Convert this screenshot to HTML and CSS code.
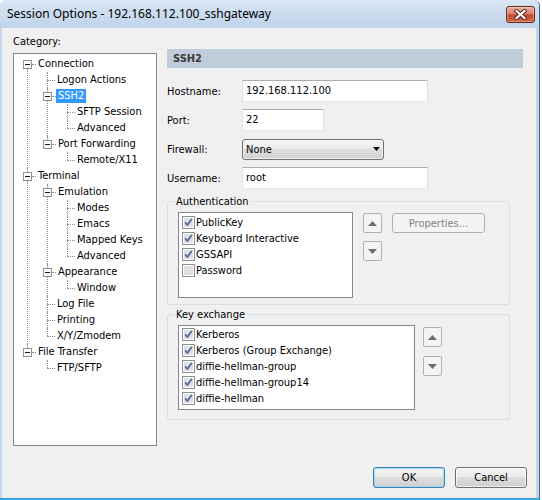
FILE: index.html
```html
<!DOCTYPE html>
<html>
<head>
<meta charset="utf-8">
<title>Session Options</title>
<link rel="stylesheet" href="styles.css">
</head>
<body>
<div class="window">
  <div class="titlebar">
    <span class="title">Session Options - 192.168.112.100_sshgateway</span>
    <div class="close"><svg width="13" height="11" viewBox="0 0 13 11"><path d="M2.5 2 L10.5 9 M10.5 2 L2.5 9" stroke="#5e2218" stroke-width="4" stroke-linecap="square" fill="none"/><path d="M2.5 2 L10.5 9 M10.5 2 L2.5 9" stroke="#fff" stroke-width="2.2" stroke-linecap="square" fill="none"/></svg></div>
  </div>
  <div class="client">
    <div class="main">
      <div class="left">
        <div class="cat-label">Category:</div>
        <div class="tree">
          <ul>
            <li>
              <div class="row"><svg class="exp" width="9" height="9" viewBox="0 0 9 9"><rect x=".5" y=".5" width="8" height="8" fill="#fafafa" stroke="#939393"/><path d="M2 4.5h5" stroke="#1a1a1a"/></svg><span class="h"></span><span class="lbl">Connection</span></div>
              <ul>
                <li><div class="row"><span class="h leaf"></span><span class="lbl">Logon Actions</span></div></li>
                <li>
                  <div class="row"><svg class="exp" width="9" height="9" viewBox="0 0 9 9"><rect x=".5" y=".5" width="8" height="8" fill="#fafafa" stroke="#939393"/><path d="M2 4.5h5" stroke="#1a1a1a"/></svg><span class="h"></span><span class="lbl sel">SSH2</span></div>
                  <ul>
                    <li><div class="row"><span class="h leaf"></span><span class="lbl">SFTP Session</span></div></li>
                    <li><div class="row"><span class="h leaf"></span><span class="lbl">Advanced</span></div></li>
                  </ul>
                </li>
                <li>
                  <div class="row"><svg class="exp" width="9" height="9" viewBox="0 0 9 9"><rect x=".5" y=".5" width="8" height="8" fill="#fafafa" stroke="#939393"/><path d="M2 4.5h5" stroke="#1a1a1a"/></svg><span class="h"></span><span class="lbl">Port Forwarding</span></div>
                  <ul>
                    <li><div class="row"><span class="h leaf"></span><span class="lbl">Remote/X11</span></div></li>
                  </ul>
                </li>
              </ul>
            </li>
            <li>
              <div class="row"><svg class="exp" width="9" height="9" viewBox="0 0 9 9"><rect x=".5" y=".5" width="8" height="8" fill="#fafafa" stroke="#939393"/><path d="M2 4.5h5" stroke="#1a1a1a"/></svg><span class="h"></span><span class="lbl">Terminal</span></div>
              <ul>
                <li>
                  <div class="row"><svg class="exp" width="9" height="9" viewBox="0 0 9 9"><rect x=".5" y=".5" width="8" height="8" fill="#fafafa" stroke="#939393"/><path d="M2 4.5h5" stroke="#1a1a1a"/></svg><span class="h"></span><span class="lbl">Emulation</span></div>
                  <ul>
                    <li><div class="row"><span class="h leaf"></span><span class="lbl">Modes</span></div></li>
                    <li><div class="row"><span class="h leaf"></span><span class="lbl">Emacs</span></div></li>
                    <li><div class="row"><span class="h leaf"></span><span class="lbl">Mapped Keys</span></div></li>
                    <li><div class="row"><span class="h leaf"></span><span class="lbl">Advanced</span></div></li>
                  </ul>
                </li>
                <li>
                  <div class="row"><svg class="exp" width="9" height="9" viewBox="0 0 9 9"><rect x=".5" y=".5" width="8" height="8" fill="#fafafa" stroke="#939393"/><path d="M2 4.5h5" stroke="#1a1a1a"/></svg><span class="h"></span><span class="lbl">Appearance</span></div>
                  <ul>
                    <li><div class="row"><span class="h leaf"></span><span class="lbl">Window</span></div></li>
                  </ul>
                </li>
                <li><div class="row"><span class="h leaf"></span><span class="lbl">Log File</span></div></li>
                <li><div class="row"><span class="h leaf"></span><span class="lbl">Printing</span></div></li>
                <li><div class="row"><span class="h leaf"></span><span class="lbl">X/Y/Zmodem</span></div></li>
              </ul>
            </li>
            <li>
              <div class="row"><svg class="exp" width="9" height="9" viewBox="0 0 9 9"><rect x=".5" y=".5" width="8" height="8" fill="#fafafa" stroke="#939393"/><path d="M2 4.5h5" stroke="#1a1a1a"/></svg><span class="h"></span><span class="lbl">File Transfer</span></div>
              <ul>
                <li><div class="row"><span class="h leaf"></span><span class="lbl">FTP/SFTP</span></div></li>
              </ul>
            </li>
          </ul>
        </div>
      </div>

      <div class="right">
        <div class="header">SSH2</div>
        <div class="form">
          <div class="frow"><span class="flabel">Hostname:</span><div class="tb w-wide">192.168.112.100</div></div>
          <div class="frow"><span class="flabel">Port:</span><div class="tb w-port">22</div></div>
          <div class="frow"><span class="flabel">Firewall:</span><div class="combo"><span>None</span><svg width="7" height="4" viewBox="0 0 7 4"><path d="M0 0H7L3.5 4Z" fill="#000"/></svg></div></div>
          <div class="frow"><span class="flabel">Username:</span><div class="tb w-wide">root</div></div>
        </div>

        <fieldset class="group auth">
          <legend>Authentication</legend>
          <div class="grow">
            <div class="list list-auth">
              <div class="item"><svg class="cb" width="13" height="13" viewBox="0 0 13 13"><rect x=".5" y=".5" width="12" height="12" fill="#fff" stroke="#8f8f8f"/><rect x="2" y="2" width="9" height="9" fill="#dedfe2"/><path d="M3.2 6.4 L5.4 9 L9.8 3" stroke="#4b5e98" stroke-width="1.7" fill="none"/></svg><span>PublicKey</span></div>
              <div class="item"><svg class="cb" width="13" height="13" viewBox="0 0 13 13"><rect x=".5" y=".5" width="12" height="12" fill="#fff" stroke="#8f8f8f"/><rect x="2" y="2" width="9" height="9" fill="#dedfe2"/><path d="M3.2 6.4 L5.4 9 L9.8 3" stroke="#4b5e98" stroke-width="1.7" fill="none"/></svg><span>Keyboard Interactive</span></div>
              <div class="item"><svg class="cb" width="13" height="13" viewBox="0 0 13 13"><rect x=".5" y=".5" width="12" height="12" fill="#fff" stroke="#8f8f8f"/><rect x="2" y="2" width="9" height="9" fill="#dedfe2"/><path d="M3.2 6.4 L5.4 9 L9.8 3" stroke="#4b5e98" stroke-width="1.7" fill="none"/></svg><span>GSSAPI</span></div>
              <div class="item"><svg class="cb" width="13" height="13" viewBox="0 0 13 13"><rect x=".5" y=".5" width="12" height="12" fill="#fff" stroke="#8f8f8f"/><rect x="2" y="2" width="9" height="9" fill="#dedfe2"/></svg><span>Password</span></div>
            </div>
            <div class="arrows arrows-auth">
              <div class="arr"><svg width="9" height="5" viewBox="0 0 9 5"><path d="M0 5H9L4.5 0Z" fill="#6e6e6e"/></svg></div>
              <div class="arr"><svg width="9" height="5" viewBox="0 0 9 5"><path d="M0 0H9L4.5 5Z" fill="#6e6e6e"/></svg></div>
            </div>
            <div class="btn props">Properties...</div>
          </div>
        </fieldset>

        <fieldset class="group kex">
          <legend>Key exchange</legend>
          <div class="grow">
            <div class="list list-kex">
              <div class="item"><svg class="cb" width="13" height="13" viewBox="0 0 13 13"><rect x=".5" y=".5" width="12" height="12" fill="#fff" stroke="#8f8f8f"/><rect x="2" y="2" width="9" height="9" fill="#dedfe2"/><path d="M3.2 6.4 L5.4 9 L9.8 3" stroke="#4b5e98" stroke-width="1.7" fill="none"/></svg><span>Kerberos</span></div>
              <div class="item"><svg class="cb" width="13" height="13" viewBox="0 0 13 13"><rect x=".5" y=".5" width="12" height="12" fill="#fff" stroke="#8f8f8f"/><rect x="2" y="2" width="9" height="9" fill="#dedfe2"/><path d="M3.2 6.4 L5.4 9 L9.8 3" stroke="#4b5e98" stroke-width="1.7" fill="none"/></svg><span>Kerberos (Group Exchange)</span></div>
              <div class="item"><svg class="cb" width="13" height="13" viewBox="0 0 13 13"><rect x=".5" y=".5" width="12" height="12" fill="#fff" stroke="#8f8f8f"/><rect x="2" y="2" width="9" height="9" fill="#dedfe2"/><path d="M3.2 6.4 L5.4 9 L9.8 3" stroke="#4b5e98" stroke-width="1.7" fill="none"/></svg><span>diffie-hellman-group</span></div>
              <div class="item"><svg class="cb" width="13" height="13" viewBox="0 0 13 13"><rect x=".5" y=".5" width="12" height="12" fill="#fff" stroke="#8f8f8f"/><rect x="2" y="2" width="9" height="9" fill="#dedfe2"/><path d="M3.2 6.4 L5.4 9 L9.8 3" stroke="#4b5e98" stroke-width="1.7" fill="none"/></svg><span>diffie-hellman-group14</span></div>
              <div class="item"><svg class="cb" width="13" height="13" viewBox="0 0 13 13"><rect x=".5" y=".5" width="12" height="12" fill="#fff" stroke="#8f8f8f"/><rect x="2" y="2" width="9" height="9" fill="#dedfe2"/><path d="M3.2 6.4 L5.4 9 L9.8 3" stroke="#4b5e98" stroke-width="1.7" fill="none"/></svg><span>diffie-hellman</span></div>
            </div>
            <div class="arrows arrows-kex">
              <div class="arr"><svg width="9" height="5" viewBox="0 0 9 5"><path d="M0 5H9L4.5 0Z" fill="#6e6e6e"/></svg></div>
              <div class="arr"><svg width="9" height="5" viewBox="0 0 9 5"><path d="M0 0H9L4.5 5Z" fill="#6e6e6e"/></svg></div>
            </div>
          </div>
        </fieldset>
      </div>
    </div>

    <div class="footer">
      <div class="btn push default">OK</div>
      <div class="btn push">Cancel</div>
    </div>
  </div>
</div>
</body>
</html>
```

FILE: styles.css
```css
html, body {
  margin: 0;
  padding: 0;
  background: #ffffff;
}
body {
  width: 542px;
  height: 500px;
  overflow: hidden;
}
.window {
  width: 539px;
  height: 498px;
  border-right: 1px solid #4d6282;
  border-bottom: 2px solid #35a5e0;
  background: #c3d6ec;
  border-radius: 6px 6px 0 0;
  display: flex;
  flex-direction: column;
  overflow: hidden;
}
.titlebar {
  height: 28px;
  flex: none;
  display: flex;
  align-items: flex-start;
  background: linear-gradient(#d9e6f4, #bfd3ea);
}
.title {
  font-family: "Noto Sans", "Open Sans", sans-serif;
  font-size: 12px;
  line-height: 27px;
  margin-left: 7px;
  color: #000;
  white-space: nowrap;
}
.close {
  margin-left: auto;
  margin-top: 6px;
  margin-right: 4px;
  width: 29px;
  height: 17px;
  box-sizing: border-box;
  border: 1px solid #6b2519;
  border-radius: 3px;
  background: linear-gradient(#eab0a2 0%, #d98371 42%, #c4482f 55%, #d0694e 100%);
  box-shadow: inset 0 0 0 1px rgba(255, 255, 255, 0.3);
  display: flex;
  align-items: center;
  justify-content: center;
}
.client {
  flex: 1;
  margin: 0 3px 0 2px;
  background: #f0f0f0;
  padding: 7px 9px 0 11px;
  font-family: "DejaVu Sans Condensed", "Liberation Sans", sans-serif;
  font-size: 11px;
  color: #000;
}
.main {
  display: grid;
  grid-template-columns: 144px 356px;
  column-gap: 10px;
  align-items: start;
}
.cat-label {
  line-height: 13px;
}
.tree {
  margin-top: 5px;
  width: 144px;
  height: 393px;
  box-sizing: border-box;
  border: 1px solid #828790;
  background: #fff;
  padding-top: 2px;
  overflow: hidden;
}
.tree ul {
  list-style: none;
  margin: 0;
  padding: 0;
}
.tree li {
  position: relative;
}
.tree li ul {
  padding-left: 20px;
}
.tree li::before {
  content: "";
  position: absolute;
  left: 13px;
  top: 0;
  bottom: 0;
  border-left: 1px dotted #8c8c8c;
}
.tree li:last-child::before {
  bottom: auto;
  height: 8px;
}
.tree > ul > li:first-child::before {
  top: 8px;
}
.row {
  height: 16px;
  display: flex;
  align-items: flex-start;
  padding-left: 9px;
}
.exp {
  position: relative;
  flex: none;
  margin-top: 4px;
}
.h {
  flex: none;
  width: 4px;
  margin-top: 8px;
  border-top: 1px dotted #8c8c8c;
}
.h.leaf {
  margin-left: 4px;
  width: 8px;
}
.lbl {
  margin-top: 1px;
  padding: 0 2px;
  line-height: 14px;
  white-space: nowrap;
}
.lbl.sel {
  background: #3399ff;
  color: #fff;
}
.header {
  margin-top: 14px;
  height: 19px;
  line-height: 19px;
  padding-left: 6px;
  background: #bfcddb;
  color: #3a3a3a;
  font-weight: bold;
}
.form {
  margin-top: 12px;
  display: flex;
  flex-direction: column;
  gap: 7px;
}
.frow {
  height: 22px;
  display: flex;
  align-items: center;
}
.flabel {
  width: 75px;
  flex: none;
}
.tb {
  height: 22px;
  box-sizing: border-box;
  border: 1px solid;
  border-color: #abadb3 #dbdfe6 #e3e9ef #e2e3ea;
  background: #fff;
  padding-left: 3px;
  line-height: 20px;
}
.w-wide { width: 186px; }
.w-port { width: 82px; }
.combo {
  width: 142px;
  height: 21px;
  box-sizing: border-box;
  border: 1px solid #707070;
  border-radius: 3px;
  background: linear-gradient(#f3f3f3 0%, #ebebeb 50%, #dddddd 50%, #d1d1d1 100%);
  box-shadow: inset 0 0 0 1px rgba(255, 255, 255, 0.6);
  display: flex;
  align-items: center;
  justify-content: space-between;
  padding: 0 3px 0 3px;
}
.group {
  border: 1px solid #d5dfe5;
  border-radius: 3px;
  margin: 6px 13px 0 0;
  padding: 4px 10px 6px 10px;
  min-width: 0;
}
.group legend {
  padding: 0 2px;
  margin-left: -4px;
  line-height: 13px;
}
.kex {
  margin-top: 3px;
  padding-bottom: 9px;
}
.grow {
  display: flex;
  align-items: flex-start;
}
.list {
  box-sizing: border-box;
  border: 1px solid #828790;
  background: #fff;
}
.list-auth {
  width: 175px;
  height: 86px;
  padding-top: 1px;
}
.list-kex {
  width: 237px;
  height: 85px;
}
.item {
  height: 16px;
  display: flex;
  align-items: center;
  padding-left: 3px;
  white-space: nowrap;
}
.cb {
  flex: none;
  margin-right: 1px;
}
.arrows {
  display: flex;
  flex-direction: column;
}
.arrows-auth {
  margin-left: 10px;
  margin-top: 1px;
  gap: 8px;
}
.arrows-kex {
  margin-left: 8px;
  margin-top: 2px;
  gap: 9px;
}
.arr {
  width: 19px;
  height: 20px;
  box-sizing: border-box;
  border: 1px solid #adb2b5;
  border-radius: 2px;
  background: #f4f4f4;
  display: flex;
  align-items: center;
  justify-content: center;
}
.btn {
  box-sizing: border-box;
  display: flex;
  align-items: center;
  justify-content: center;
  border-radius: 3px;
}
.props {
  margin-left: 10px;
  margin-top: 1px;
  width: 93px;
  height: 20px;
  border: 1px solid #adb2b5;
  background: #f4f4f4;
  color: #838383;
}
.footer {
  margin-top: 21px;
  display: flex;
  justify-content: flex-end;
  gap: 10px;
}
.push {
  width: 72px;
  height: 21px;
  border: 1px solid #707070;
  background: linear-gradient(#f2f2f2 0%, #ebebeb 50%, #dddddd 50%, #cfcfcf 100%);
  box-shadow: inset 0 0 0 1px rgba(255, 255, 255, 0.7);
}
.push.default {
  border-color: #3c7fb1;
  box-shadow: inset 0 0 0 1px #9fdcf7;
}
```
